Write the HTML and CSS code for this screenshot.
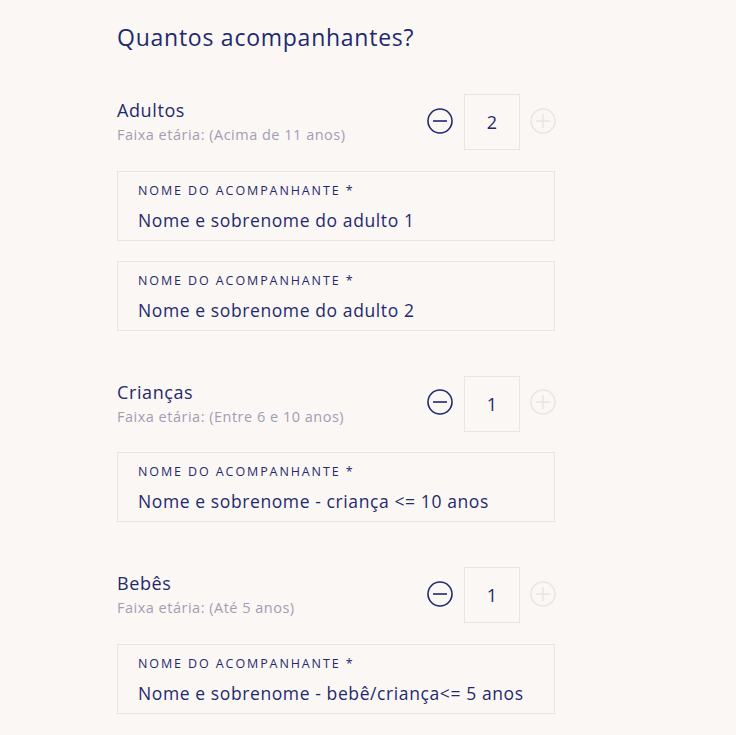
FILE: index.html
```html
<!DOCTYPE html>
<html lang="pt">
<head>
<meta charset="utf-8">
<link rel="stylesheet" href="styles.css">
</head>
<body>
<main class="page">
  <h1 class="title">Quantos acompanhantes?</h1>

  <section class="group">
    <div class="group-head">
      <div class="group-info">
        <div class="group-name">Adultos</div>
        <div class="group-age">Faixa etária: (Acima de 11 anos)</div>
      </div>
      <div class="counter">
        <button class="circle minus" aria-label="menos"><svg viewBox="0 0 26 26" width="26" height="26"><circle cx="13" cy="13" r="12" fill="none" stroke="currentColor" stroke-width="1.6"/><line x1="6" y1="13" x2="20" y2="13" stroke="currentColor" stroke-width="1.6"/></svg></button>
        <div class="count">2</div>
        <button class="circle plus" aria-label="mais"><svg viewBox="0 0 26 26" width="26" height="26"><circle cx="13" cy="13" r="12" fill="none" stroke="currentColor" stroke-width="1.6"/><line x1="6" y1="13" x2="20" y2="13" stroke="currentColor" stroke-width="1.6"/><line x1="13" y1="6" x2="13" y2="20" stroke="currentColor" stroke-width="1.6"/></svg></button>
      </div>
    </div>
    <div class="field"><span class="field-label">Nome do acompanhante *</span><span class="field-value">Nome e sobrenome do adulto 1</span></div>
    <div class="field"><span class="field-label">Nome do acompanhante *</span><span class="field-value">Nome e sobrenome do adulto 2</span></div>
  </section>

  <section class="group">
    <div class="group-head">
      <div class="group-info">
        <div class="group-name">Crianças</div>
        <div class="group-age">Faixa etária: (Entre 6 e 10 anos)</div>
      </div>
      <div class="counter">
        <button class="circle minus" aria-label="menos"><svg viewBox="0 0 26 26" width="26" height="26"><circle cx="13" cy="13" r="12" fill="none" stroke="currentColor" stroke-width="1.6"/><line x1="6" y1="13" x2="20" y2="13" stroke="currentColor" stroke-width="1.6"/></svg></button>
        <div class="count">1</div>
        <button class="circle plus" aria-label="mais"><svg viewBox="0 0 26 26" width="26" height="26"><circle cx="13" cy="13" r="12" fill="none" stroke="currentColor" stroke-width="1.6"/><line x1="6" y1="13" x2="20" y2="13" stroke="currentColor" stroke-width="1.6"/><line x1="13" y1="6" x2="13" y2="20" stroke="currentColor" stroke-width="1.6"/></svg></button>
      </div>
    </div>
    <div class="field"><span class="field-label">Nome do acompanhante *</span><span class="field-value">Nome e sobrenome - criança &lt;= 10 anos</span></div>
  </section>

  <section class="group">
    <div class="group-head">
      <div class="group-info">
        <div class="group-name">Bebês</div>
        <div class="group-age">Faixa etária: (Até 5 anos)</div>
      </div>
      <div class="counter">
        <button class="circle minus" aria-label="menos"><svg viewBox="0 0 26 26" width="26" height="26"><circle cx="13" cy="13" r="12" fill="none" stroke="currentColor" stroke-width="1.6"/><line x1="6" y1="13" x2="20" y2="13" stroke="currentColor" stroke-width="1.6"/></svg></button>
        <div class="count">1</div>
        <button class="circle plus" aria-label="mais"><svg viewBox="0 0 26 26" width="26" height="26"><circle cx="13" cy="13" r="12" fill="none" stroke="currentColor" stroke-width="1.6"/><line x1="6" y1="13" x2="20" y2="13" stroke="currentColor" stroke-width="1.6"/><line x1="13" y1="6" x2="13" y2="20" stroke="currentColor" stroke-width="1.6"/></svg></button>
      </div>
    </div>
    <div class="field"><span class="field-label">Nome do acompanhante *</span><span class="field-value">Nome e sobrenome - bebê/criança&lt;= 5 anos</span></div>
  </section>
</main>
</body>
</html>
```

FILE: styles.css
```css
html, body {
  margin: 0;
  padding: 0;
  background: #fbf7f4;
}
body {
  font-family: "Open Sans", "Noto Sans", sans-serif;
  color: #1f2a6e;
}
.page {
  width: 438px;
  margin-left: 117px;
  padding-top: 22px;
}
.title {
  margin: 0 0 42px 0;
  font-size: 23px;
  letter-spacing: 0.75px;
  font-weight: 400;
  line-height: 30px;
  color: #1f2a6e;
}
.group {
  display: flex;
  flex-direction: column;
  gap: 20px;
  margin-bottom: 45px;
}
.group-head {
  display: flex;
  justify-content: space-between;
  align-items: flex-start;
  height: 56.5px;
}
.group-info {
  display: flex;
  flex-direction: column;
  padding-top: 5px;
}
.group-name {
  font-size: 18px;
  letter-spacing: 0.6px;
  line-height: 22px;
}
.group-age {
  margin-top: 4px;
  font-size: 14.5px;
  letter-spacing: 0.5px;
  line-height: 20px;
  color: #a39db4;
}
.counter {
  display: flex;
  align-items: center;
  gap: 10px;
  height: 56px;
}
.circle {
  width: 26px;
  height: 26px;
  padding: 0;
  border: 0;
  background: none;
  display: flex;
  margin-top: -3px;
}
.minus {
  color: #1f2a6e;
  margin-right: 1px;
}
.plus {
  color: #ebe5e1;
  margin-right: -1px;
}
.count {
  box-sizing: border-box;
  width: 56px;
  height: 56px;
  border: 1px solid #ebe5e1;
  display: flex;
  align-items: center;
  justify-content: center;
  font-size: 18px;
}
.field {
  box-sizing: border-box;
  height: 70px;
  border: 1px solid #ebe5e1;
  padding: 10px 20px 0;
  display: flex;
  flex-direction: column;
}
.field-label {
  font-size: 12.5px;
  letter-spacing: 1.9px;
  text-transform: uppercase;
  line-height: 18px;
}
.field-value {
  margin-top: 9px;
  font-size: 17.5px;
  letter-spacing: 0.6px;
  line-height: 22px;
}
```
